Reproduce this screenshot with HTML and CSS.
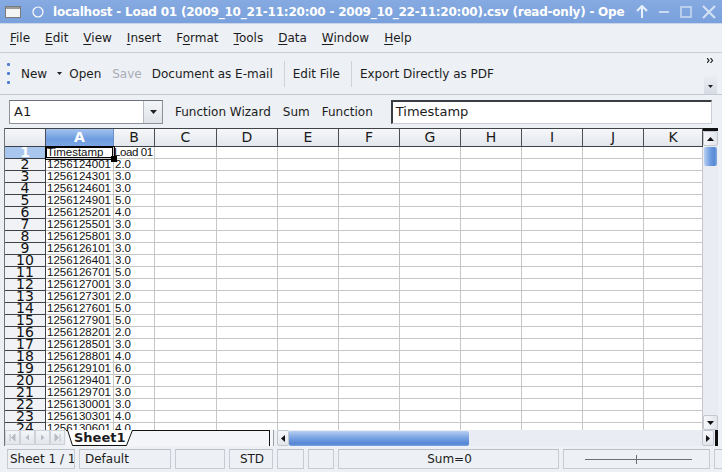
FILE: index.html
```html
<!DOCTYPE html>
<html>
<head>
<meta charset="utf-8">
<title>localhost - Load 01</title>
<link rel="stylesheet" href="styles.css">
</head>
<body>
<div class="window">
  <div class="titlebar">
    <svg class="winicon" width="16" height="12" viewBox="0 0 16 12"><rect x="0.5" y="0.5" width="15" height="11" fill="#f4f4f4" stroke="#7a7a7a"/><rect x="1" y="1" width="14" height="2" fill="#9a9a9a"/></svg>
    <svg class="pin" width="12" height="12" viewBox="0 0 12 12"><circle cx="6" cy="6" r="5" fill="none" stroke="#ffffff" stroke-width="1.2"/></svg>
    <span class="title">localhost - Load 01 (2009_10_21-11:20:00 - 2009_10_22-11:20:00).csv (read-only) - Ope</span>
    <div class="wbtns">
      <svg width="12" height="14" viewBox="0 0 12 14"><path d="M6 1 L6 13 M1 6 L6 1 L11 6" fill="none" stroke="#e8f0fb" stroke-width="2"/></svg>
      <svg width="12" height="14" viewBox="0 0 12 14"><path d="M1 7 H11" stroke="#c9d9f2" stroke-width="2"/></svg>
      <svg width="12" height="12" viewBox="0 0 12 12"><rect x="1" y="1" width="10" height="10" fill="none" stroke="#c9d9f2" stroke-width="1.6"/></svg>
      <svg width="14" height="14" viewBox="0 0 14 14"><path d="M1 1 L13 13 M13 1 L1 13" stroke="#d6e2f5" stroke-width="2"/></svg>
    </div>
  </div>

  <div class="menubar">
    <span class="mi"><u>F</u>ile</span>
    <span class="mi"><u>E</u>dit</span>
    <span class="mi"><u>V</u>iew</span>
    <span class="mi"><u>I</u>nsert</span>
    <span class="mi">F<u>o</u>rmat</span>
    <span class="mi"><u>T</u>ools</span>
    <span class="mi"><u>D</u>ata</span>
    <span class="mi"><u>W</u>indow</span>
    <span class="mi"><u>H</u>elp</span>
  </div>

  <div class="toolbar">
    <span class="handle"><i></i><i></i><i></i></span>
    <span class="tb tb-new">New</span>
    <svg class="drop" width="5" height="3" viewBox="0 0 5 3"><path d="M0 0 H5 L2.5 3 Z" fill="#222"/></svg>
    <span class="tb tb-open">Open</span>
    <span class="tb tb-save">Save</span>
    <span class="tb tb-mail">Document as E-mail</span>
    <span class="sep"></span>
    <span class="tb tb-edit">Edit File</span>
    <span class="sep"></span>
    <span class="tb tb-pdf">Export Directly as PDF</span>
    <span class="ext">
      <svg width="7" height="5" viewBox="0 0 7 5"><path d="M0 0 L2 2.5 L0 5 M3.5 0 L5.5 2.5 L3.5 5" fill="none" stroke="#222" stroke-width="1.2"/></svg>
      <svg width="5" height="3" viewBox="0 0 5 3"><path d="M0 0 H5 L2.5 3 Z" fill="#222"/></svg>
    </span>
  </div>

  <div class="formulabar">
    <div class="namebox">
      <span class="nametext">A1</span>
      <span class="namebtn"><svg width="7" height="4" viewBox="0 0 7 4"><path d="M0 0 H7 L3.5 4 Z" fill="#222"/></svg></span>
    </div>
    <span class="fl fl-wiz">Function Wizard</span>
    <span class="fl fl-sum">Sum</span>
    <span class="fl fl-fn">Function</span>
    <div class="inputline">Timestamp</div>
  </div>

  <div class="sheet">
    <div class="grid">
      <div class="row hdr">
        <span class="corner"></span><span class="ch sel">A</span><span class="ch">B</span><span class="ch">C</span><span class="ch">D</span><span class="ch">E</span><span class="ch">F</span><span class="ch">G</span><span class="ch">H</span><span class="ch">I</span><span class="ch">J</span><span class="ch">K</span>
      </div>
      <div class="row"><span class="rh sel">1</span><span class="c cur">Timestamp<i class="handlebox"></i></span><span class="c spill">Load 01</span><span class="c"></span><span class="c"></span><span class="c"></span><span class="c"></span><span class="c"></span><span class="c"></span><span class="c"></span><span class="c"></span><span class="c"></span></div>
      <div class="row"><span class="rh">2</span><span class="c">1256124001</span><span class="c">2.0</span><span class="c"></span><span class="c"></span><span class="c"></span><span class="c"></span><span class="c"></span><span class="c"></span><span class="c"></span><span class="c"></span><span class="c"></span></div>
      <div class="row"><span class="rh">3</span><span class="c">1256124301</span><span class="c">3.0</span><span class="c"></span><span class="c"></span><span class="c"></span><span class="c"></span><span class="c"></span><span class="c"></span><span class="c"></span><span class="c"></span><span class="c"></span></div>
      <div class="row"><span class="rh">4</span><span class="c">1256124601</span><span class="c">3.0</span><span class="c"></span><span class="c"></span><span class="c"></span><span class="c"></span><span class="c"></span><span class="c"></span><span class="c"></span><span class="c"></span><span class="c"></span></div>
      <div class="row"><span class="rh">5</span><span class="c">1256124901</span><span class="c">5.0</span><span class="c"></span><span class="c"></span><span class="c"></span><span class="c"></span><span class="c"></span><span class="c"></span><span class="c"></span><span class="c"></span><span class="c"></span></div>
      <div class="row"><span class="rh">6</span><span class="c">1256125201</span><span class="c">4.0</span><span class="c"></span><span class="c"></span><span class="c"></span><span class="c"></span><span class="c"></span><span class="c"></span><span class="c"></span><span class="c"></span><span class="c"></span></div>
      <div class="row"><span class="rh">7</span><span class="c">1256125501</span><span class="c">3.0</span><span class="c"></span><span class="c"></span><span class="c"></span><span class="c"></span><span class="c"></span><span class="c"></span><span class="c"></span><span class="c"></span><span class="c"></span></div>
      <div class="row"><span class="rh">8</span><span class="c">1256125801</span><span class="c">3.0</span><span class="c"></span><span class="c"></span><span class="c"></span><span class="c"></span><span class="c"></span><span class="c"></span><span class="c"></span><span class="c"></span><span class="c"></span></div>
      <div class="row"><span class="rh">9</span><span class="c">1256126101</span><span class="c">3.0</span><span class="c"></span><span class="c"></span><span class="c"></span><span class="c"></span><span class="c"></span><span class="c"></span><span class="c"></span><span class="c"></span><span class="c"></span></div>
      <div class="row"><span class="rh">10</span><span class="c">1256126401</span><span class="c">3.0</span><span class="c"></span><span class="c"></span><span class="c"></span><span class="c"></span><span class="c"></span><span class="c"></span><span class="c"></span><span class="c"></span><span class="c"></span></div>
      <div class="row"><span class="rh">11</span><span class="c">1256126701</span><span class="c">5.0</span><span class="c"></span><span class="c"></span><span class="c"></span><span class="c"></span><span class="c"></span><span class="c"></span><span class="c"></span><span class="c"></span><span class="c"></span></div>
      <div class="row"><span class="rh">12</span><span class="c">1256127001</span><span class="c">3.0</span><span class="c"></span><span class="c"></span><span class="c"></span><span class="c"></span><span class="c"></span><span class="c"></span><span class="c"></span><span class="c"></span><span class="c"></span></div>
      <div class="row"><span class="rh">13</span><span class="c">1256127301</span><span class="c">2.0</span><span class="c"></span><span class="c"></span><span class="c"></span><span class="c"></span><span class="c"></span><span class="c"></span><span class="c"></span><span class="c"></span><span class="c"></span></div>
      <div class="row"><span class="rh">14</span><span class="c">1256127601</span><span class="c">5.0</span><span class="c"></span><span class="c"></span><span class="c"></span><span class="c"></span><span class="c"></span><span class="c"></span><span class="c"></span><span class="c"></span><span class="c"></span></div>
      <div class="row"><span class="rh">15</span><span class="c">1256127901</span><span class="c">5.0</span><span class="c"></span><span class="c"></span><span class="c"></span><span class="c"></span><span class="c"></span><span class="c"></span><span class="c"></span><span class="c"></span><span class="c"></span></div>
      <div class="row"><span class="rh">16</span><span class="c">1256128201</span><span class="c">2.0</span><span class="c"></span><span class="c"></span><span class="c"></span><span class="c"></span><span class="c"></span><span class="c"></span><span class="c"></span><span class="c"></span><span class="c"></span></div>
      <div class="row"><span class="rh">17</span><span class="c">1256128501</span><span class="c">3.0</span><span class="c"></span><span class="c"></span><span class="c"></span><span class="c"></span><span class="c"></span><span class="c"></span><span class="c"></span><span class="c"></span><span class="c"></span></div>
      <div class="row"><span class="rh">18</span><span class="c">1256128801</span><span class="c">4.0</span><span class="c"></span><span class="c"></span><span class="c"></span><span class="c"></span><span class="c"></span><span class="c"></span><span class="c"></span><span class="c"></span><span class="c"></span></div>
      <div class="row"><span class="rh">19</span><span class="c">1256129101</span><span class="c">6.0</span><span class="c"></span><span class="c"></span><span class="c"></span><span class="c"></span><span class="c"></span><span class="c"></span><span class="c"></span><span class="c"></span><span class="c"></span></div>
      <div class="row"><span class="rh">20</span><span class="c">1256129401</span><span class="c">7.0</span><span class="c"></span><span class="c"></span><span class="c"></span><span class="c"></span><span class="c"></span><span class="c"></span><span class="c"></span><span class="c"></span><span class="c"></span></div>
      <div class="row"><span class="rh">21</span><span class="c">1256129701</span><span class="c">3.0</span><span class="c"></span><span class="c"></span><span class="c"></span><span class="c"></span><span class="c"></span><span class="c"></span><span class="c"></span><span class="c"></span><span class="c"></span></div>
      <div class="row"><span class="rh">22</span><span class="c">1256130001</span><span class="c">3.0</span><span class="c"></span><span class="c"></span><span class="c"></span><span class="c"></span><span class="c"></span><span class="c"></span><span class="c"></span><span class="c"></span><span class="c"></span></div>
      <div class="row"><span class="rh">23</span><span class="c">1256130301</span><span class="c">4.0</span><span class="c"></span><span class="c"></span><span class="c"></span><span class="c"></span><span class="c"></span><span class="c"></span><span class="c"></span><span class="c"></span><span class="c"></span></div>
      <div class="row"><span class="rh">24</span><span class="c">1256130601</span><span class="c">4.0</span><span class="c"></span><span class="c"></span><span class="c"></span><span class="c"></span><span class="c"></span><span class="c"></span><span class="c"></span><span class="c"></span><span class="c"></span></div>
    </div>
    <div class="vscroll">
      <span class="vtop"></span>
      <span class="sbtn"><svg width="7" height="4" viewBox="0 0 7 4"><path d="M0 4 H7 L3.5 0 Z" fill="#111"/></svg></span>
      <span class="vthumb"></span>
      <span class="vtrack"></span>
      <span class="sbtn"><svg width="7" height="4" viewBox="0 0 7 4"><path d="M0 0 H7 L3.5 4 Z" fill="#111"/></svg></span>
    </div>
  </div>

  <div class="tabbar">
    <div class="navbtns">
      <span class="nb"><svg width="7" height="7" viewBox="0 0 7 7"><path d="M1 0 V7 M6 0 L2.5 3.5 L6 7 Z" stroke="#b8bcc4" fill="#b8bcc4"/></svg></span>
      <span class="nb"><svg width="7" height="7" viewBox="0 0 7 7"><path d="M5 0.5 L1.5 3.5 L5 6.5 Z" fill="#b8bcc4"/></svg></span>
      <span class="nb"><svg width="7" height="7" viewBox="0 0 7 7"><path d="M2 0.5 L5.5 3.5 L2 6.5 Z" fill="#b8bcc4"/></svg></span>
      <span class="nb"><svg width="7" height="7" viewBox="0 0 7 7"><path d="M6 0 V7 M1 0 L4.5 3.5 L1 7 Z" stroke="#b8bcc4" fill="#b8bcc4"/></svg></span>
    </div>
    <div class="tabs">
      <svg class="tabshape" width="66" height="16" viewBox="0 0 66 16"><path d="M0.5 0 L5.5 15.5 H59.5 L65.5 0" fill="#ffffff" stroke="#111" stroke-width="1"/></svg>
      <span class="tabname">Sheet1</span>
    </div>
    <span class="splitter"></span>
    <div class="hscroll">
      <span class="hbtn"><svg width="4" height="7" viewBox="0 0 4 7"><path d="M4 0 V7 L0 3.5 Z" fill="#111"/></svg></span>
      <span class="hthumb"></span>
      <span class="htrack"></span>
      <span class="hbtn"><svg width="4" height="7" viewBox="0 0 4 7"><path d="M0 0 V7 L4 3.5 Z" fill="#111"/></svg></span>
      <span class="hend"></span>
    </div>
  </div>

  <div class="statusbar">
    <span class="sf sf1">Sheet 1 / 1</span>
    <span class="sf sf2">Default</span>
    <span class="sf sf3"></span>
    <span class="sf sf4">STD</span>
    <span class="sf sf5"></span>
    <span class="sf sf6"></span>
    <span class="sf sf7">Sum=0</span>
    <span class="sf sf8"><span class="zline"></span><span class="ztick"></span></span>
    <span class="sf sf9"></span>
  </div>
</div>
</body>
</html>
```

FILE: styles.css
```css
* { box-sizing: border-box; }
html, body { margin: 0; padding: 0; }
body {
  width: 722px;
  height: 472px;
  overflow: hidden;
  background: #edf0f5;
  font-family: "DejaVu Sans", sans-serif;
  font-size: 12px;
  color: #1c1c1c;
}
.window { width: 722px; height: 472px; display: flex; flex-direction: column; }

/* title bar */
.titlebar {
  height: 24px;
  flex: none;
  display: flex;
  align-items: center;
  background: linear-gradient(#86aae1, #7aa1dc);
  border-bottom: 1px solid #c9d6ea;
  color: #fff;
  padding-left: 5px;
  overflow: hidden;
}
.winicon { flex: none; margin-top: 1px; }
.pin { flex: none; margin-left: 11px; }
.title {
  margin-left: 9px;
  font-weight: bold;
  font-size: 12px;
  white-space: nowrap;
  letter-spacing: -0.22px;
  flex: none;
}
.wbtns { display: flex; align-items: center; gap: 10px; margin-left: 12px; flex: none; }

/* menu */
.menubar {
  height: 29px;
  flex: none;
  display: flex;
  align-items: center;
  padding-left: 10px;
  gap: 15px;
  border-bottom: 1px solid #c8ced8;
  font-size: 12px;
}
.mi { white-space: nowrap; }
.mi u { text-decoration-thickness: 1px; text-underline-offset: 2px; }

/* toolbar */
.toolbar {
  height: 42px;
  flex: none;
  display: flex;
  align-items: center;
  border-bottom: 1px solid #c4cad4;
  position: relative;
}
.handle { width: 6px; margin-left: 5px; display: flex; flex-direction: column; gap: 6px; align-items: center; }
.handle i { display: block; width: 3px; height: 3px; background: #4d7fd0; border-radius: 1px; }
.tb { white-space: nowrap; }
.tb-new { margin-left: 10px; }
.drop { margin-left: 10px; }
.tb-open { margin-left: 7px; }
.tb-save { margin-left: 11px; color: #a8adb5; }
.tb-mail { margin-left: 10px; }
.sep { width: 1px; height: 26px; background: #cfd4dc; margin-left: 11px; }
.tb-edit { margin-left: 8px; }
.sep + .tb-pdf { margin-left: 8px; }
.ext {
  position: absolute;
  right: 5px;
  top: 2px;
  bottom: 0;
  width: 13px;
  display: flex;
  flex-direction: column;
  justify-content: space-between;
  align-items: center;
  padding: 3px 0 6px;
  background: linear-gradient(#edf0f5, #edf0f5 50%, #d6dbe3);
}

/* formula bar */
.formulabar {
  height: 33px;
  flex: none;
  display: flex;
  align-items: center;
  padding-left: 9px;
}
.namebox {
  width: 154px;
  height: 24px;
  display: flex;
  border: 1px solid #8d929a;
  border-top-color: #6e737b;
  background: #fff;
}
.nametext { flex: 1; padding-left: 4px; line-height: 22px; font-size: 13px; }
.namebtn {
  width: 19px;
  border-left: 1px solid #b5bac2;
  background: linear-gradient(#f3f5f8, #dfe3e9);
  display: flex; align-items: center; justify-content: center;
}
.fl { white-space: nowrap; }
.fl-wiz { margin-left: 12px; }
.fl-sum { margin-left: 12px; }
.fl-fn { margin-left: 12px; }
.inputline {
  margin-left: 18px;
  width: 321px;
  height: 24px;
  background: #fff;
  border: 1px solid #c9ced6;
  border-top: 2px solid #3a3d42;
  border-left: 2px solid #3a3d42;
  font-size: 13px;
  line-height: 20px;
  padding-left: 3px;
}

/* sheet */
.sheet {
  height: 302px;
  flex: none;
  margin: 0 4px;
  display: flex;
  border-left: 1px solid #6f737a;
  overflow: hidden;
}
.grid {
  width: 698px;
  flex: none;
  border-top: 1px solid #404348;
  overflow: hidden;
}
.row {
  display: grid;
  grid-template-columns: 41px 68px 41px 62px 61px 61px 61px 61px 61px 61px 61px 59px;
  height: 12px;
}
.row.hdr { height: 18px; }
.c {
  border-right: 1px solid #c6c6c6;
  border-bottom: 1px solid #c6c6c6;
  font-family: "Liberation Sans", sans-serif;
  font-size: 11.5px;
  line-height: 11px;
  padding-left: 1px;
  white-space: nowrap;
  overflow: hidden;
  background: #fff;
  color: #111;
}
.c.spill {
  overflow: visible;
  padding-left: 0;
  letter-spacing: -0.4px;
  position: relative;
  z-index: 1;
}
.c.cur {
  position: relative;
  overflow: visible;
  box-shadow: inset 0 0 0 1px #000;
  outline: 1px solid #000;
  z-index: 2;
}
.handlebox {
  position: absolute;
  right: -4px;
  bottom: -4px;
  width: 6px;
  height: 6px;
  background: #000;
}
.corner, .ch {
  border-right: 1px solid #4b4e54;
  border-bottom: 1px solid #3d4046;
  background: linear-gradient(#f6f7fa, #e3e7ed);
}
.ch {
  text-align: center;
  font-size: 14px;
  line-height: 17px;
  color: #1a1a1a;
}
.ch.sel {
  background: linear-gradient(#a4c3ef, #6d9ce0 60%, #7aa5e4);
  color: #fff;
  font-weight: bold;
  border-right-color: #6b8fc6;
}
.rh {
  border-right: 1px solid #3d4046;
  border-bottom: 1px solid #3d4046;
  background: #f0f2f6;
  text-align: center;
  font-size: 14px;
  line-height: 11px;
  color: #111;
  overflow: hidden;
}
.rh.sel { background: #a9c6ee; color: #fff; font-weight: bold; }

.vscroll {
  width: 15px;
  flex: none;
  display: flex;
  flex-direction: column;
  background: #e9edf3;
}
.vtop { height: 3px; background: #111; flex: none; }
.sbtn {
  height: 15px;
  flex: none;
  display: flex; align-items: center; justify-content: center;
  background: linear-gradient(to right, #f6f7fa, #e2e6ec);
  border: 1px solid #c3c8d0;
  border-radius: 2px;
}
.vthumb {
  height: 19px;
  flex: none;
  margin: 1px 1px 0;
  background: linear-gradient(to right, #b9d0f1, #6d9be0 50%, #5a8ad6 80%, #83a9e2);
  border-radius: 2px;
}
.vtrack { flex: 1; }

/* tab bar */
.tabbar {
  height: 16px;
  flex: none;
  display: flex;
  margin: 0 4px;
  border-left: 1px solid #6f737a;
}
.navbtns { display: flex; width: 61px; flex: none; }
.nb {
  width: 15px; height: 15px;
  border: 1px solid #cdd1d8;
  background: linear-gradient(#f3f5f8, #e2e6ec);
  display: flex; align-items: center; justify-content: center;
}
.tabs {
  width: 203px;
  flex: none;
  position: relative;
  border-top: 1px solid #111;
  background: #f3f5f9;
}
.tabshape { position: absolute; left: 1px; top: -1px; }
.tabname {
  position: absolute;
  left: 8px;
  top: -1px;
  font-weight: bold;
  font-size: 13px;
  line-height: 15px;
}
.splitter {
  width: 5px;
  flex: none;
  border-left: 1px solid #111;
  border-right: 1px solid #9aa0a8;
  background: #f6f7fa;
  margin-right: 3px;
}
.hscroll { flex: 1; display: flex; background: #e9edf3; }
.hbtn {
  width: 12px;
  flex: none;
  display: flex; align-items: center; justify-content: center;
  background: linear-gradient(#f6f7fa, #e2e6ec);
  border: 1px solid #c3c8d0;
  border-radius: 2px;
}
.hthumb {
  width: 180px;
  flex: none;
  margin-top: 1px;
  background: linear-gradient(#b8cff1, #7aa4e3 45%, #5685d4 85%, #7aa2df);
  border-radius: 2px;
}
.htrack { flex: 1; }
.hend { width: 3px; flex: none; margin-left: 1px; background: #111; }

/* status bar */
.statusbar {
  flex: 1;
  display: flex;
  align-items: center;
  padding: 2px 0 3px 7px;
  gap: 4px;
}
.sf {
  height: 20px;
  border: 1px solid #c7ccd4;
  border-top-color: #b9bec7;
  line-height: 18px;
  padding-left: 2px;
  white-space: nowrap;
  overflow: hidden;
  flex: none;
  position: relative;
}
.sf1 { width: 68px; }
.sf2 { width: 92px; padding-left: 5px; }
.sf3 { width: 50px; }
.sf4 { width: 44px; text-align: center; }
.sf5 { width: 27px; }
.sf6 { width: 26px; }
.sf7 { width: 221px; text-align: center; }
.sf8 { width: 147px; }
.sf9 { width: 10px; }
.zline { position: absolute; left: 21px; width: 107px; top: 9px; height: 1px; background: #6b6f76; }
.ztick { position: absolute; left: 72px; top: 5px; width: 1px; height: 9px; background: #6b6f76; }
```
